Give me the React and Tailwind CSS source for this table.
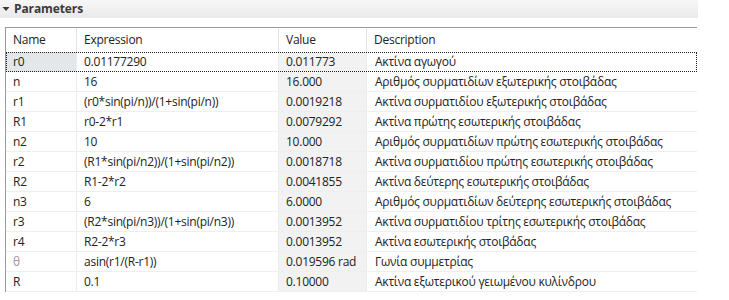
import React from "react";

const rows = [
  ["r0", "0.01177290", "0.011773", "Ακτίνα αγωγού"],
  ["n", "16", "16.000", "Αριθμός συρματιδίων εξωτερικής στοιβάδας"],
  ["r1", "(r0*sin(pi/n))/(1+sin(pi/n))", "0.0019218", "Ακτίνα συρματιδίου εξωτερικής στοιβάδας"],
  ["R1", "r0-2*r1", "0.0079292", "Ακτίνα πρώτης εσωτερικής στοιβάδας"],
  ["n2", "10", "10.000", "Αριθμός συρματιδίων πρώτης εσωτερικής στοιβάδας"],
  ["r2", "(R1*sin(pi/n2))/(1+sin(pi/n2))", "0.0018718", "Ακτίνα συρματιδίου πρώτης εσωτερικής στοιβάδας"],
  ["R2", "R1-2*r2", "0.0041855", "Ακτίνα δεύτερης εσωτερικής στοιβάδας"],
  ["n3", "6", "6.0000", "Αριθμός συρματιδίων δεύτερης εσωτερικής στοιβάδας"],
  ["r3", "(R2*sin(pi/n3))/(1+sin(pi/n3))", "0.0013952", "Ακτίνα συρματιδίου τρίτης εσωτερικής στοιβάδας"],
  ["r4", "R2-2*r3", "0.0013952", "Ακτίνα εσωτερικής στοιβάδας"],
  ["θ", "asin(r1/(R-r1))", "0.019596 rad", "Γωνία συμμετρίας"],
  ["R", "0.1", "0.10000", "Ακτίνα εξωτερικού γειωμένου κυλίνδρου"],
];

export default function App() {
  return (
    <div
      className="w-[729px] h-[300px] bg-white overflow-hidden text-[12px] tracking-[-0.25px] text-[#222]"
      style={{ fontFamily: '"Open Sans", "Noto Sans", sans-serif' }}
    >
      <div className="h-[18px] w-[698px] flex items-center bg-gradient-to-b from-[#f7f7f7] to-[#e9e9e9]">
        <svg width="8" height="6" viewBox="0 0 8 6" className="ml-[2px] mr-[4px]">
          <path d="M0.5 1 L7.5 1 L4 5 Z" fill="#3a3a3a" />
        </svg>
        <span className="font-bold text-[#3a3a3a] text-[12px] tracking-[-0.1px] leading-none">Parameters</span>
      </div>
      <div className="mt-[9px] ml-[5px] w-[692px] border-t border-l border-[#9a9a9a]">
        <div className="grid grid-cols-[71px_202px_88px_1fr] h-[24px] items-stretch">
          {["Name", "Expression", "Value", "Description"].map((h, i) => (
            <div
              key={h}
              className={`flex items-center pl-[7px] ${i < 3 ? "border-r border-[#e3e3e3]" : ""}`}
            >
              {h}
            </div>
          ))}
        </div>
        {rows.map((r, idx) => {
          const sel = idx === 0;
          return (
            <div
              key={idx}
              className={`grid grid-cols-[71px_202px_88px_1fr] h-[20px] ${
                sel ? "outline outline-1 outline-dotted outline-[#222] -outline-offset-1" : "border-b border-[#efefef]"
              }`}
            >
              <div
                className={`flex items-center pl-[7px] border-r border-[#ececec] ${
                  sel ? "bg-[#e4e7ea]" : ""
                } ${r[0] === "θ" ? "text-[#9a9a9a]" : ""}`}
              >
                {r[0]}
              </div>
              <div className="flex items-center pl-[7px] border-r border-[#ececec] whitespace-nowrap">
                {r[1]}
              </div>
              <div className="flex items-center pl-[7px] bg-[#f2f2f2] border-r border-[#ececec] whitespace-nowrap">
                {r[2]}
              </div>
              <div className="flex items-center pl-[8px] whitespace-nowrap">{r[3]}</div>
            </div>
          );
        })}
      </div>
    </div>
  );
}
